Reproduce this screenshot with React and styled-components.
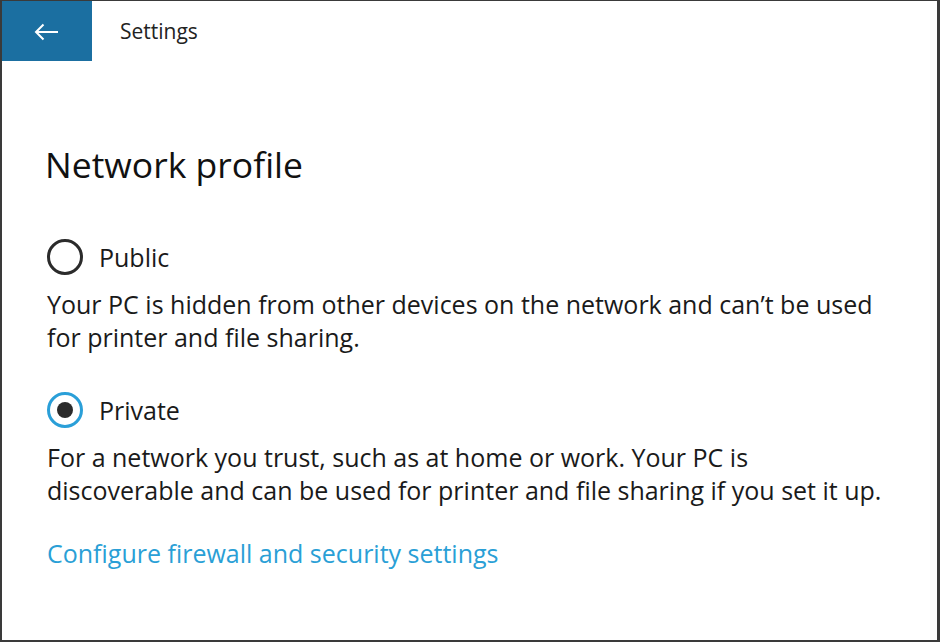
import React from "react";
import styled, { createGlobalStyle } from "styled-components";

const Global = createGlobalStyle`
  html, body { margin: 0; padding: 0; background: #fff; }
  body { font-family: "Open Sans", "Noto Sans", sans-serif; }
  * { box-sizing: border-box; }
`;

const Frame = styled.div`
  width: 940px;
  height: 642px;
  border-top: 1px solid #3a3a3a;
  border-left: 2px solid #3a3a3a;
  border-right: 3px solid #3a3a3a;
  border-bottom: 2px solid #3a3a3a;
  background: #fff;
  display: flex;
  flex-direction: column;
  overflow: hidden;
`;

const TitleBar = styled.div`
  display: flex;
  align-items: center;
  height: 60px;
  margin-top: -1px;
  margin-left: -2px;
`;

const BackButton = styled.button`
  width: 92px;
  height: 61px;
  border: none;
  padding: 3px 0 0 0;
  background: #1b6fa1;
  display: flex;
  align-items: center;
  justify-content: center;
  color: #fff;
`;

const Title = styled.div`
  margin-left: 28px;
  margin-top: 2px;
  font-size: 21px;
  color: #222;
`;

const Content = styled.div`
  padding: 82px 0 0 43px;
  display: flex;
  flex-direction: column;
`;

const Heading = styled.h1`
  margin: 0;
  font-size: 35.5px;
  font-weight: 400;
  color: #111;
  line-height: 44px;
`;

const Option = styled.div`
  display: flex;
  align-items: center;
  gap: 16px;
  height: 36px;
  margin-top: ${(p) => p.$top}px;
  margin-left: 2px;
`;

const Radio = styled.span`
  width: 36px;
  height: 36px;
  border-radius: 50%;
  border: 3px solid ${(p) => (p.$checked ? "#2a9fd8" : "#2b2b2b")};
  display: flex;
  align-items: center;
  justify-content: center;
  &::after {
    content: "";
    width: 16px;
    height: 16px;
    border-radius: 50%;
    background: #2b2b2b;
    display: ${(p) => (p.$checked ? "block" : "none")};
  }
`;

const Label = styled.span`
  font-size: 25px;
  line-height: 36px;
  color: #1a1a1a;
`;

const Desc = styled.p`
  margin: 13px 0 0 2px;
  font-size: 25px;
  line-height: 33px;
  color: #1a1a1a;
  max-width: 845px;
`;

const Link = styled.a`
  margin-top: 30px;
  margin-left: 2px;
  font-size: 25px;
  line-height: 33px;
  color: #2a9fd6;
  text-decoration: none;
  cursor: pointer;
`;

export default function App() {
  return (
    <>
      <Global />
      <Frame>
        <TitleBar>
          <BackButton aria-label="Back">
            <svg width="25" height="18" viewBox="0 0 25 18" fill="none" stroke="#fff" strokeWidth="2">
              <path d="M24 9H2M9.5 1.5L2 9l7.5 7.5" />
            </svg>
          </BackButton>
          <Title>Settings</Title>
        </TitleBar>
        <Content>
          <Heading>Network profile</Heading>
          <Option $top={53}>
            <Radio />
            <Label>Public</Label>
          </Option>
          <Desc>
            Your PC is hidden from other devices on the network and can’t be used for printer and file sharing.
          </Desc>
          <Option $top={38}>
            <Radio $checked />
            <Label>Private</Label>
          </Option>
          <Desc>
            For a network you trust, such as at home or work. Your PC is discoverable and can be used for printer and file sharing if you set it up.
          </Desc>
          <Link>Configure firewall and security settings</Link>
        </Content>
      </Frame>
    </>
  );
}
